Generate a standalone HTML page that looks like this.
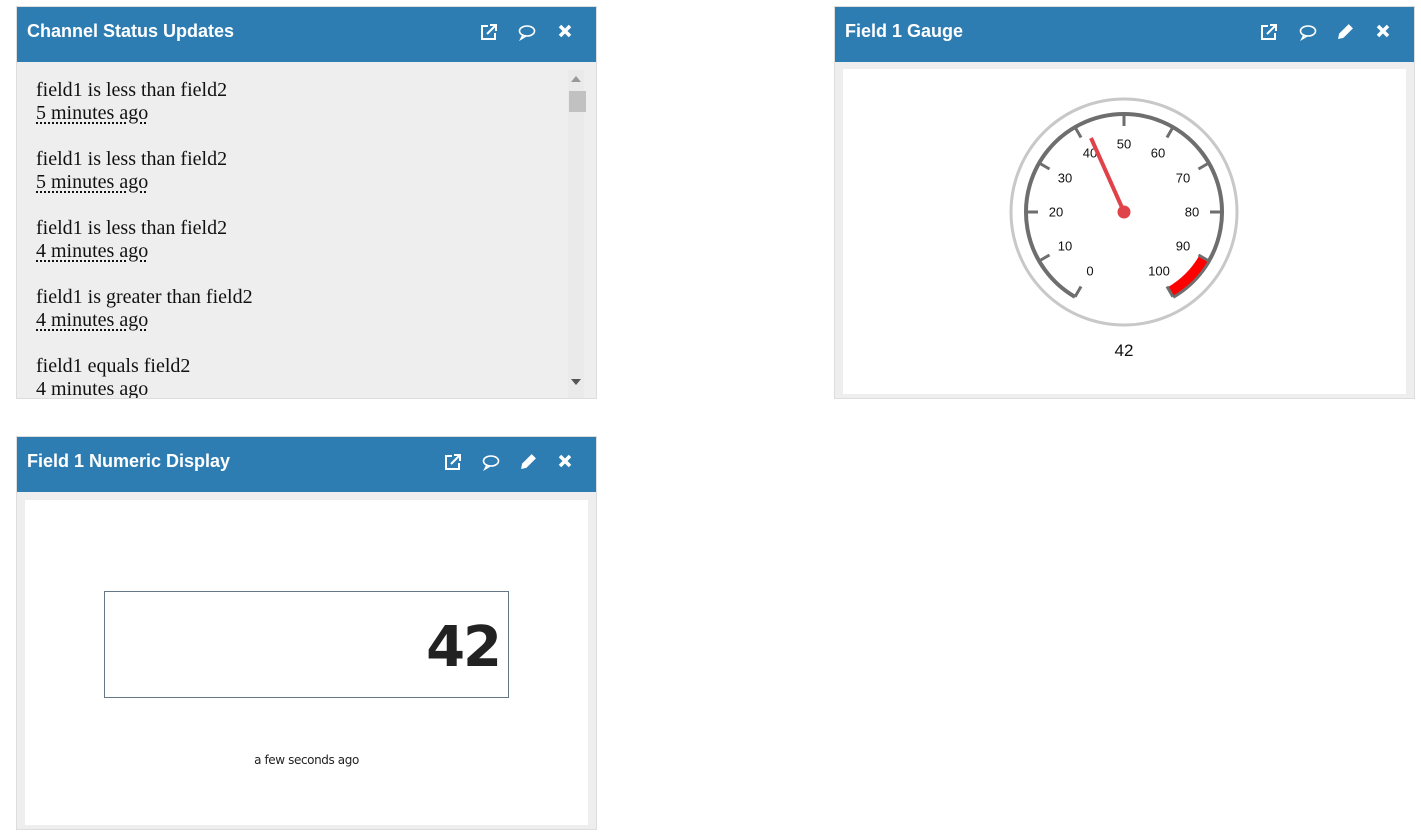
<!DOCTYPE html>
<html><head><meta charset="utf-8"><style>
body{margin:0;width:1421px;height:835px;background:#fff;position:relative;overflow:hidden;font-family:"Liberation Sans",sans-serif}
.p{position:absolute;background:#eee;border:1px solid #ddd;box-sizing:border-box}
.h{position:absolute;left:0;right:0;top:0;height:55px;background:#2e7db2;color:#fff;font-weight:bold;font-size:18px;line-height:48px;padding-left:10px;font-family:"Liberation Sans",sans-serif}
.ic{position:absolute;top:16px}
.msg{font-family:"Liberation Serif",serif;font-size:20px;color:#111;line-height:23px;margin-bottom:23px}
.msg u{text-decoration:underline dotted;text-underline-offset:3px}
.w{position:absolute;background:#fff}
</style></head><body>
<div class="p" style="left:16px;top:6px;width:581px;height:393px">
 <div class="h">Channel Status Updates
  <svg class="ic" style="left:463px" width="18" height="18" viewBox="0 0 18 18" fill="none" stroke="#fff" stroke-width="2"><path d="M8 3H2v13h13v-6"/><path d="M7 11l8-8M10 2h6v6"/></svg>
  <svg class="ic" style="left:501px" width="18" height="18" viewBox="0 0 18 18" fill="none" stroke="#fff" stroke-width="1.6"><ellipse cx="9" cy="8" rx="7.5" ry="5"/><path d="M5 12l-2 4 5-3"/></svg>
  <svg class="ic" style="left:540px" width="16" height="16" viewBox="0 0 16 16" stroke="#fff" stroke-width="3.5"><path d="M3 3l10 10M13 3L3 13"/></svg>
 </div>
 <div style="position:absolute;left:0;top:55px;width:549px;height:336px;overflow:hidden;padding:17px 0 0 19px;box-sizing:border-box">
  <div class="msg">field1 is less than field2<br><u>5 minutes ago</u></div>
  <div class="msg">field1 is less than field2<br><u>5 minutes ago</u></div>
  <div class="msg">field1 is less than field2<br><u>4 minutes ago</u></div>
  <div class="msg">field1 is greater than field2<br><u>4 minutes ago</u></div>
  <div class="msg">field1 equals field2<br>4 minutes ago</div>
 </div>
 <div style="position:absolute;left:551px;top:63px;width:16px;height:328px;background:#eaeaea"></div>
 <div style="position:absolute;left:554px;top:69px;width:0;height:0;border:5px solid transparent;border-bottom:6px solid #999;border-top:0"></div>
 <div style="position:absolute;left:552px;top:84px;width:17px;height:21px;background:#c1c1c1"></div>
 <div style="position:absolute;left:554px;top:372px;width:0;height:0;border:5px solid transparent;border-top:6px solid #555;border-bottom:0"></div>
</div>

<div class="p" style="left:834px;top:6px;width:581px;height:393px">
 <div class="h">Field 1 Gauge
  <svg class="ic" style="left:425px" width="18" height="18" viewBox="0 0 18 18" fill="none" stroke="#fff" stroke-width="2"><path d="M8 3H2v13h13v-6"/><path d="M7 11l8-8M10 2h6v6"/></svg>
  <svg class="ic" style="left:464px" width="18" height="18" viewBox="0 0 18 18" fill="none" stroke="#fff" stroke-width="1.6"><ellipse cx="9" cy="8" rx="7.5" ry="5"/><path d="M5 12l-2 4 5-3"/></svg>
  <svg class="ic" style="left:502px" width="17" height="17" viewBox="0 0 16 16" fill="#fff"><path d="M11 1l4 4-9 9-5 1 1-5z"/></svg>
  <svg class="ic" style="left:540px" width="16" height="16" viewBox="0 0 16 16" stroke="#fff" stroke-width="3.5"><path d="M3 3l10 10M13 3L3 13"/></svg>
 </div>
 <div class="w" style="left:8px;top:62px;width:563px;height:325px"></div>
</div>

<div class="p" style="left:16px;top:436px;width:581px;height:394px">
 <div class="h">Field 1 Numeric Display
  <svg class="ic" style="left:427px" width="18" height="18" viewBox="0 0 18 18" fill="none" stroke="#fff" stroke-width="2"><path d="M8 3H2v13h13v-6"/><path d="M7 11l8-8M10 2h6v6"/></svg>
  <svg class="ic" style="left:465px" width="18" height="18" viewBox="0 0 18 18" fill="none" stroke="#fff" stroke-width="1.6"><ellipse cx="9" cy="8" rx="7.5" ry="5"/><path d="M5 12l-2 4 5-3"/></svg>
  <svg class="ic" style="left:503px" width="17" height="17" viewBox="0 0 16 16" fill="#fff"><path d="M11 1l4 4-9 9-5 1 1-5z"/></svg>
  <svg class="ic" style="left:540px" width="16" height="16" viewBox="0 0 16 16" stroke="#fff" stroke-width="3.5"><path d="M3 3l10 10M13 3L3 13"/></svg>
 </div>
 <div class="w" style="left:8px;top:63px;width:563px;height:325px">
  <div style="position:absolute;left:79px;top:91px;width:405px;height:107px;border:1px solid #667788;text-align:right;font-family:'DejaVu Sans',sans-serif;font-weight:bold;font-size:56px;line-height:112px;color:#222;padding-right:8px;box-sizing:border-box;letter-spacing:-2px">42</div>
  <div style="position:absolute;left:0;right:0;top:253px;text-align:center;font-size:12px;color:#222;font-family:'DejaVu Sans',sans-serif;letter-spacing:-0.4px">a few seconds ago</div>
 </div>
</div>

<svg style="position:absolute;left:0;top:0" width="1421" height="835">
 <circle cx="1124" cy="212" r="113" fill="#fff" stroke="#c8c8c8" stroke-width="3"/>
 <path d="M1075,296.9 A98 98 0 1 1 1173,296.9" fill="none" stroke="#6e6e6e" stroke-width="4"/>
 <path d="M1203.7,258 A92 92 0 0 1 1170,291.7" fill="none" stroke="#f00" stroke-width="10"/>
 <g stroke="#6e6e6e" stroke-width="3">
  <path d="M1075,296.9L1081,286.5M1039.1,261L1049.5,255M1026,212L1038,212M1039.1,163L1049.5,169M1075,127.1L1081,137.5M1124,114L1124,126M1173,127.1L1167,137.5M1208.9,163L1198.5,169M1222,212L1210,212M1208.9,261L1198.5,255M1173,296.9L1167,286.5"/>
 </g>
 <g font-size="13" fill="#111" text-anchor="middle" dominant-baseline="middle" style="font-family:'Liberation Sans',sans-serif">
  <text x="1090" y="272">0</text><text x="1065" y="247">10</text><text x="1056" y="213">20</text><text x="1065" y="179">30</text><text x="1090" y="154">40</text><text x="1124" y="145">50</text><text x="1158" y="154">60</text><text x="1183" y="179">70</text><text x="1192" y="213">80</text><text x="1183" y="247">90</text><text x="1159" y="272">100</text>
 </g>
 <path d="M1124,212L1091,138" stroke="#e0424a" stroke-width="4"/>
 <circle cx="1124" cy="212" r="6.5" fill="#e0424a"/>
 <text x="1124" y="356" font-size="17" text-anchor="middle" fill="#111" style="font-family:'Liberation Sans',sans-serif">42</text>
</svg>
</body></html>
